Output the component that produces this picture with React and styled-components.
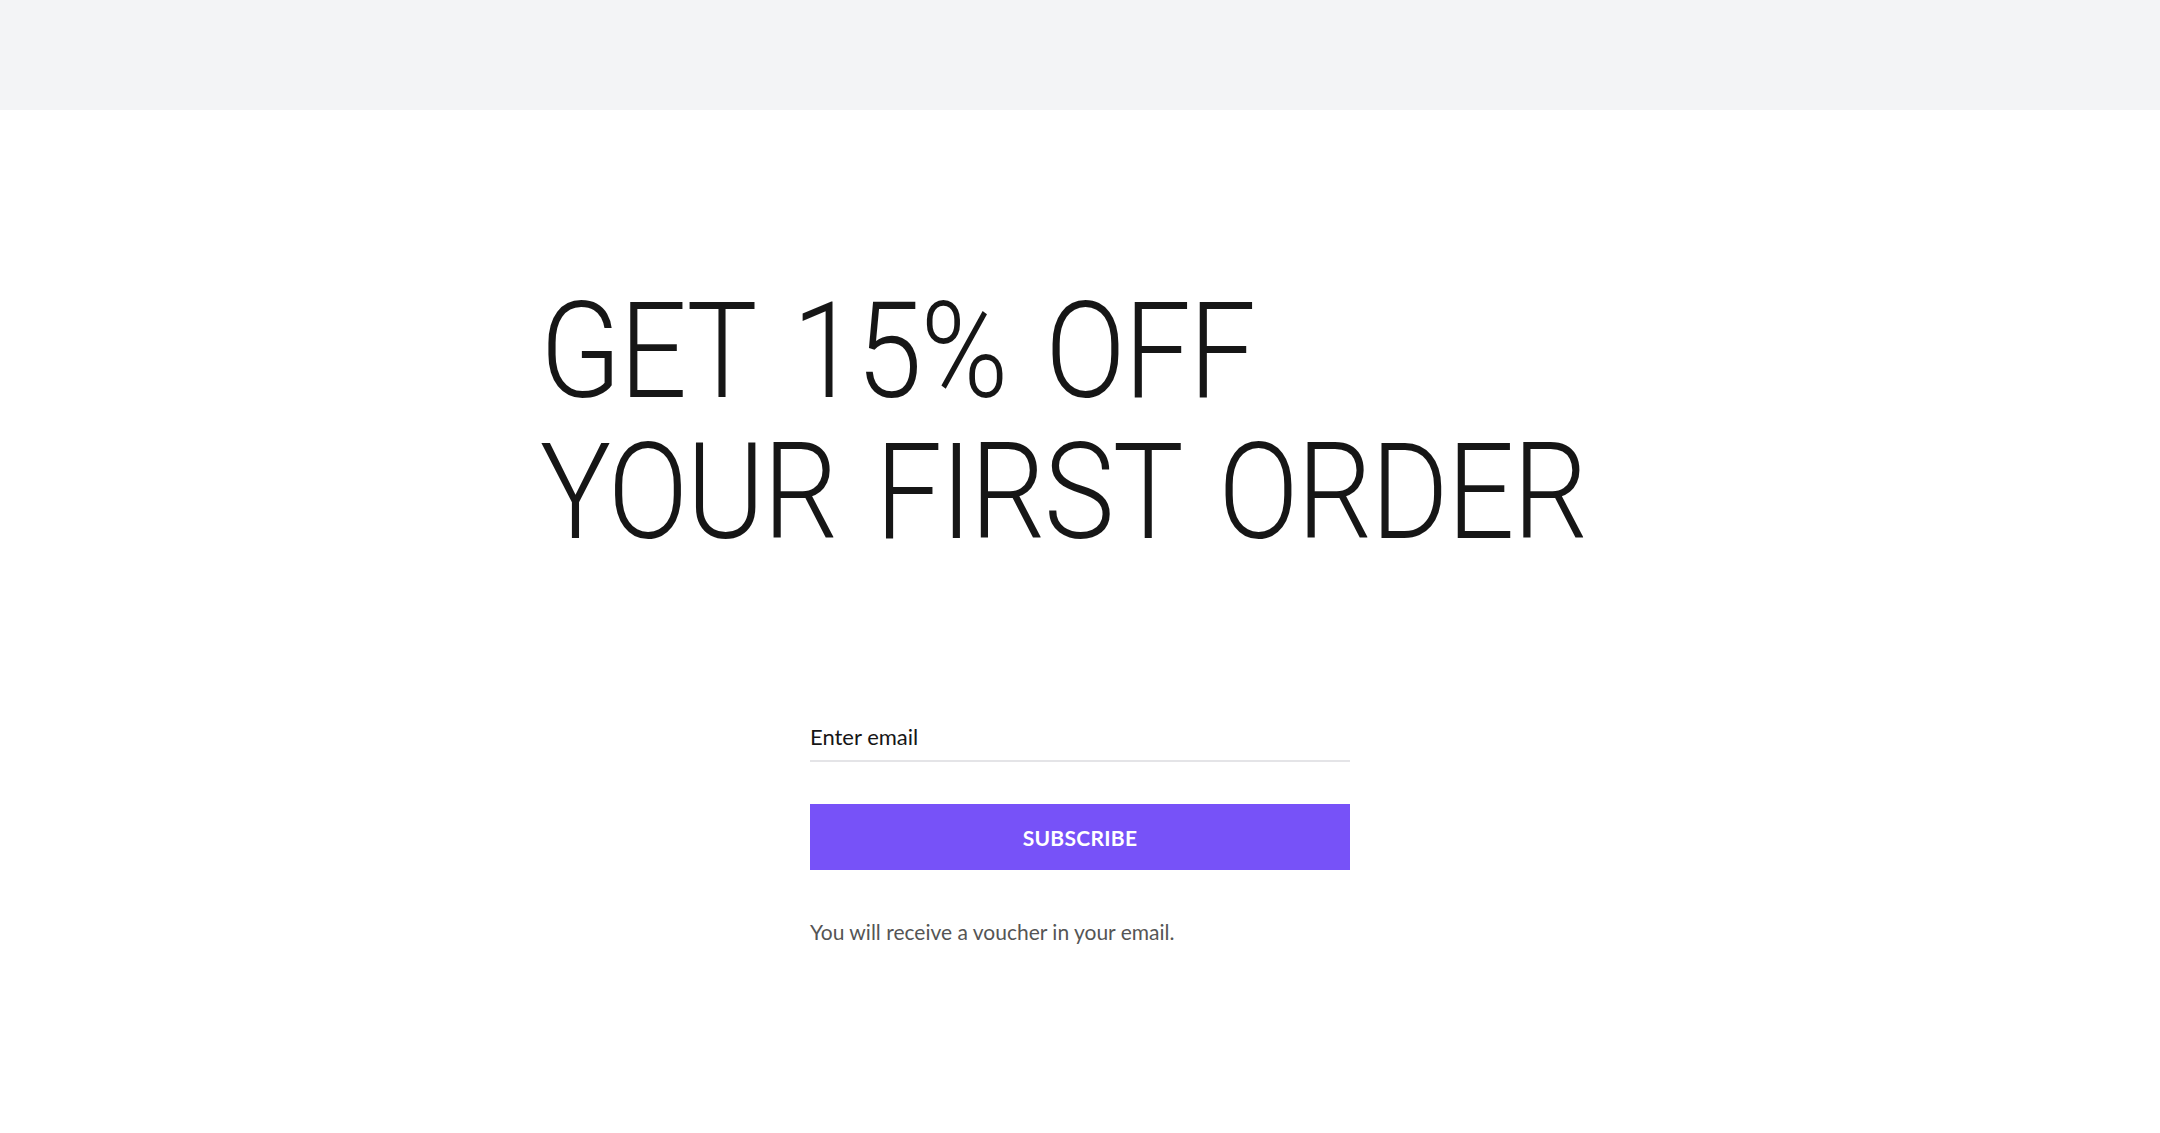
import React, { useState } from "react";
import styled, { createGlobalStyle } from "styled-components";

const GlobalStyle = createGlobalStyle`
  html, body {
    margin: 0;
    padding: 0;
    background: #ffffff;
    font-family: "Lato", "Open Sans", sans-serif;
  }
`;

const TopBar = styled.header`
  height: 110px;
  background: #f3f4f6;
`;

const Section = styled.section`
  max-width: 1080px;
  margin: 0 auto;
  padding: 171px 0 0;
`;

const Title = styled.h1`
  margin: 0;
  font-family: "Roboto", sans-serif;
  font-weight: 300;
  font-size: 134px;
  line-height: 141px;
  color: #161616;
  letter-spacing: -2px;
  word-spacing: 13px;
  white-space: nowrap;
  transform: scaleX(0.887);
  transform-origin: left top;
`;

const Form = styled.form`
  width: 540px;
  margin: 160px auto 0;
  display: flex;
  flex-direction: column;
`;

const EmailInput = styled.input`
  border: none;
  border-bottom: 2px solid #e4e4e7;
  padding: 0 0 10px;
  font-family: "Lato", sans-serif;
  font-size: 22px;
  color: #161616;
  outline: none;
  background: transparent;

  &::placeholder {
    color: #161616;
  }
`;

const Button = styled.button`
  margin-top: 42px;
  height: 66px;
  border: none;
  background: #7752f8;
  color: #ffffff;
  font-family: "Lato", sans-serif;
  font-size: 21px;
  font-weight: 700;
  letter-spacing: 0.3px;
  cursor: pointer;
`;

const Note = styled.p`
  margin: 49px 0 0;
  font-family: "Lato", sans-serif;
  font-size: 21px;
  font-weight: 400;
  color: #555555;
`;

const App = () => {
  const [email, setEmail] = useState("");

  const handleSubmit = (event) => {
    event.preventDefault();
  };

  return (
    <>
      <GlobalStyle />
      <TopBar />
      <Section>
        <Title>
          GET 15% OFF
          <br />
          YOUR FIRST ORDER
        </Title>
        <Form onSubmit={handleSubmit}>
          <EmailInput
            type="email"
            placeholder="Enter email"
            value={email}
            onChange={(event) => setEmail(event.target.value)}
          />
          <Button type="submit">SUBSCRIBE</Button>
          <Note>You will receive a voucher in your email.</Note>
        </Form>
      </Section>
    </>
  );
};

export default App;
